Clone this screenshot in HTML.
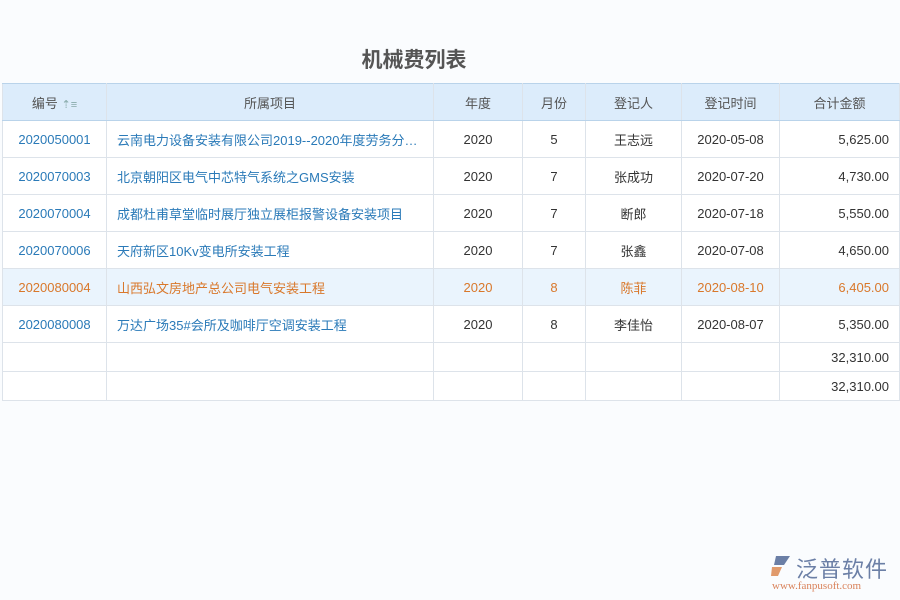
<!DOCTYPE html><html><head><meta charset="utf-8"><style>
body{margin:0;width:900px;height:600px;background:#fafcfe;font-family:"Liberation Sans","Noto Sans CJK SC",sans-serif;position:relative;overflow:hidden}
h1{position:absolute;top:44px;left:0;width:828px;text-align:center;margin:0;font-size:21px;color:#555;font-weight:bold}
table{position:absolute;top:83px;left:2px;width:897px;border-collapse:collapse;font-size:13px;table-layout:fixed}
td,th{border:1px solid #dde3ea;padding:0 10px;white-space:nowrap;overflow:hidden;text-overflow:ellipsis}
th{height:36px;background:#dcecfb;color:#555;font-weight:normal;border-top:1px solid #b9d3ea;border-bottom:1px solid #b9d3ea}
td{height:36px;color:#333;text-align:center;background:#fff}
td.a{color:#2a7ab8}td.p{text-align:left;color:#2a7ab8}td.m{text-align:right}
tr.h td{background:#eaf4fd;color:#d9782b}
tr.s td{height:28px}
</style></head><body>
<h1>机械费列表</h1>
<table>
<colgroup><col style="width:104px"><col style="width:327px"><col style="width:89px"><col style="width:63px"><col style="width:96px"><col style="width:98px"><col style="width:120px"></colgroup>
<tr><th>编号 <span style="color:#8aa;font-size:11px">⇡≡</span></th><th>所属项目</th><th>年度</th><th>月份</th><th>登记人</th><th>登记时间</th><th>合计金额</th></tr>
<tr><td class="a">2020050001</td><td class="p">云南电力设备安装有限公司2019--2020年度劳务分包工程</td><td>2020</td><td>5</td><td>王志远</td><td>2020-05-08</td><td class="m">5,625.00</td></tr>
<tr><td class="a">2020070003</td><td class="p">北京朝阳区电气中芯特气系统之GMS安装</td><td>2020</td><td>7</td><td>张成功</td><td>2020-07-20</td><td class="m">4,730.00</td></tr>
<tr><td class="a">2020070004</td><td class="p">成都杜甫草堂临时展厅独立展柜报警设备安装项目</td><td>2020</td><td>7</td><td>断郎</td><td>2020-07-18</td><td class="m">5,550.00</td></tr>
<tr><td class="a">2020070006</td><td class="p">天府新区10Kv变电所安装工程</td><td>2020</td><td>7</td><td>张鑫</td><td>2020-07-08</td><td class="m">4,650.00</td></tr>
<tr class="h"><td>2020080004</td><td class="p" style="color:#d9782b">山西弘文房地产总公司电气安装工程</td><td>2020</td><td>8</td><td>陈菲</td><td>2020-08-10</td><td class="m">6,405.00</td></tr>
<tr><td class="a">2020080008</td><td class="p">万达广场35#会所及咖啡厅空调安装工程</td><td>2020</td><td>8</td><td>李佳怡</td><td>2020-08-07</td><td class="m">5,350.00</td></tr>
<tr class="s"><td></td><td></td><td></td><td></td><td></td><td></td><td class="m">32,310.00</td></tr>
<tr class="s"><td></td><td></td><td></td><td></td><td></td><td></td><td class="m">32,310.00</td></tr>
</table>
<div style="position:absolute;left:770px;top:555px;width:22px;height:22px">
<svg width="22" height="22" viewBox="0 0 22 22"><path d="M6 1h14l-6 9H4z" fill="#6b7fa6"/><path d="M2 12h10l-4 9H1z" fill="#e09a6c"/></svg></div>
<div style="position:absolute;left:796px;top:552px;font-size:22px;color:#6b7fa6;letter-spacing:1px">泛普软件</div>
<div style="position:absolute;left:772px;top:580px;font-size:11px;color:#d9825a;font-family:'Liberation Serif',serif">www.fanpusoft.com</div>
</body></html>
